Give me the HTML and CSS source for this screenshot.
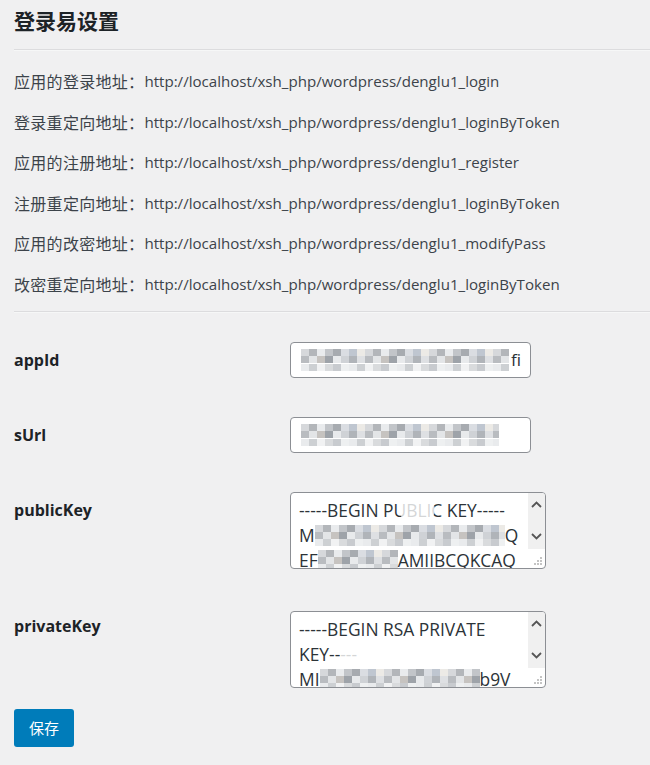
FILE: index.html
```html
<!DOCTYPE html>
<html lang="zh-CN">
<head>
<meta charset="utf-8">
<title>登录易设置</title>
<link rel="stylesheet" href="styles.css">
</head>
<body>
<div class="wrap">
  <h1 class="title">登录易设置</h1>
  <hr class="sep">
  <div class="urls">
    <p class="row"><span class="k">应用的登录地址：</span><span class="v">http://localhost/xsh_php/wordpress/denglu1_login</span></p>
    <p class="row"><span class="k">登录重定向地址：</span><span class="v">http://localhost/xsh_php/wordpress/denglu1_loginByToken</span></p>
    <p class="row"><span class="k">应用的注册地址：</span><span class="v">http://localhost/xsh_php/wordpress/denglu1_register</span></p>
    <p class="row"><span class="k">注册重定向地址：</span><span class="v">http://localhost/xsh_php/wordpress/denglu1_loginByToken</span></p>
    <p class="row"><span class="k">应用的改密地址：</span><span class="v">http://localhost/xsh_php/wordpress/denglu1_modifyPass</span></p>
    <p class="row"><span class="k">改密重定向地址：</span><span class="v">http://localhost/xsh_php/wordpress/denglu1_loginByToken</span></p>
  </div>
  <hr class="sep">
  <form class="form">
    <label class="lbl">appId</label>
    <div class="input"><span class="mosaic m1"></span><span class="tail">fi</span></div>

    <label class="lbl">sUrl</label>
    <div class="input"><span class="mosaic m2"></span></div>

    <label class="lbl">publicKey</label>
    <div class="ta">
      <div class="ta-text">
        <div class="line">-----BEGIN PUB<span class="blob"></span>LIC KEY-----</div>
        <div class="line">M<span class="mosaic m3"></span>Q</div>
        <div class="line">EF<span class="mosaic m4"></span>AMIIBCQKCAQ</div>
      </div>
      <div class="sb">
        <div class="track">
          <svg class="chev" width="11" height="7" viewBox="0 0 11 7"><polyline points="1,6 5.5,1.5 10,6" fill="none" stroke="#555" stroke-width="1.8"/></svg>
          <svg class="chev" width="11" height="7" viewBox="0 0 11 7"><polyline points="1,1 5.5,5.5 10,1" fill="none" stroke="#555" stroke-width="1.8"/></svg>
        </div>
        <div class="corner">
          <svg width="8" height="8" viewBox="0 0 8 8"><g fill="#c4c4c4"><rect x="6" y="0" width="2" height="2"/><rect x="3" y="3" width="2" height="2"/><rect x="6" y="3" width="2" height="2"/><rect x="0" y="6" width="2" height="2"/><rect x="3" y="6" width="2" height="2"/><rect x="6" y="6" width="2" height="2"/></g></svg>
        </div>
      </div>
    </div>

    <label class="lbl">privateKey</label>
    <div class="ta ta2">
      <div class="ta-text">
        <div class="line">-----BEGIN RSA PRIVATE</div>
        <div class="line">KEY----<span class="blob small"></span>-</div>
        <div class="line">MI<span class="mosaic m5"></span>b9V</div>
      </div>
      <div class="sb">
        <div class="track">
          <svg class="chev" width="11" height="7" viewBox="0 0 11 7"><polyline points="1,6 5.5,1.5 10,6" fill="none" stroke="#555" stroke-width="1.8"/></svg>
          <svg class="chev" width="11" height="7" viewBox="0 0 11 7"><polyline points="1,1 5.5,5.5 10,1" fill="none" stroke="#555" stroke-width="1.8"/></svg>
        </div>
        <div class="corner">
          <svg width="8" height="8" viewBox="0 0 8 8"><g fill="#c4c4c4"><rect x="6" y="0" width="2" height="2"/><rect x="3" y="3" width="2" height="2"/><rect x="6" y="3" width="2" height="2"/><rect x="0" y="6" width="2" height="2"/><rect x="3" y="6" width="2" height="2"/><rect x="6" y="6" width="2" height="2"/></g></svg>
        </div>
      </div>
    </div>
  </form>
  <button class="btn" type="button">保存</button>
</div>
</body>
</html>
```
FILE: styles.css
```css
html, body {
  margin: 0;
  padding: 0;
  background: #f0f0f1;
}
body {
  font-family: "Open Sans", "Noto Sans CJK SC", sans-serif;
  color: #3c434a;
}
.wrap {
  padding: 5px 0 0 14px;
}
.title {
  margin: 0;
  font-family: "Noto Sans CJK SC", sans-serif;
  font-size: 21px;
  line-height: 30px;
  font-weight: 700;
  color: #1d2327;
  height: 31px;
}
.sep {
  margin: 13px 0 0 0;
  border: 0;
  border-top: 1px solid #dcdcde;
  border-bottom: 1px solid #f6f7f7;
  height: 0;
}
.urls {
  display: flex;
  flex-direction: column;
  gap: 20.6px;
  padding: 20px 0 4px;
}
.row {
  margin: 0;
  height: 20px;
  line-height: 20px;
  white-space: nowrap;
  display: flex;
  align-items: center;
}
.k {
  font-family: "Noto Sans CJK SC", sans-serif;
  font-size: 16px;
  letter-spacing: 0.3px;
}
.v {
  font-size: 15.1px;
}
.form {
  display: grid;
  grid-template-columns: 276px auto;
  row-gap: 39px;
  padding-top: 29px;
  align-items: start;
}
.lbl {
  font-size: 16px;
  font-weight: 700;
  line-height: 36px;
  color: #1d2327;
}
.input {
  width: 241px;
  height: 36px;
  box-sizing: border-box;
  border: 1px solid #8c8f94;
  border-radius: 4px;
  background: #fff;
  display: flex;
  align-items: center;
  padding: 0 8px 0 10px;
  overflow: hidden;
}
.mosaic {
  display: inline-block;
  vertical-align: middle;
  height: 22px;
  background-image:
    repeating-linear-gradient(90deg, #d6d8db 0 8px, #b3b6ba 8px 16px, #e9ebed 16px 24px, #c2c5c9 24px 32px, #a7abb0 32px 40px, #dadde2 40px 48px, #bfc6d0 48px 56px, #eceae6 56px 64px),
    repeating-linear-gradient(90deg, #b9bcc0 0 8px, #e3e5e7 8px 16px, #c6c3c0 16px 24px, #9ea3a9 24px 32px, #e8eaec 32px 40px, #cfd2d6 40px 48px, #b0b4b9 48px 56px, #dee0e3 56px 64px),
    repeating-linear-gradient(90deg, #e9ebed 0 8px, #cdd0d3 8px 16px, #f1f2f3 16px 24px, #d9dbdd 24px 32px, #c8cbcf 32px 40px, #eef0f1 40px 48px);
  background-size: 100% 33.4%, 100% 33.4%, 100% 33.4%;
  background-position: 0 0, 0 50%, 0 100%;
  background-repeat: no-repeat;
}
.m1 { width: 208px; }
.m2 { width: 198px; }
.tail { font-size: 17px; color: #2c3338; margin-left: 2px; }
.ta {
  width: 256px;
  height: 77px;
  box-sizing: border-box;
  border: 1px solid #8c8f94;
  border-radius: 4px;
  background: #fff;
  display: flex;
  overflow: hidden;
}
.ta2 { margin-top: 3px; }
.ta-text {
  flex: 1;
  padding: 5px 0 0 8px;
  font-size: 17.4px;
  line-height: 25px;
  color: #2c3338;
  overflow: hidden;
  white-space: nowrap;
}
.line {
  height: 25px;
  display: flex;
  align-items: center;
}
.m3 { width: 190px; height: 21px; }
.m4 { width: 80px; height: 21px; }
.m5 { width: 160px; height: 21px; }
.blob {
  display: inline-block;
  width: 36px;
  height: 22px;
  background: rgba(255,255,255,0.8);
  border-radius: 11px;
  margin: 0 -18px;
  position: relative;
  z-index: 1;
}
.blob.small { width: 22px; margin: 0 -11px; }
.sb {
  width: 17px;
  flex: none;
  display: flex;
  flex-direction: column;
}
.track {
  flex: 1;
  background: #f0f0f0;
  display: flex;
  flex-direction: column;
  justify-content: space-between;
  align-items: center;
  padding: 8px 0 9px;
}
.chev { display: block; }
.corner {
  height: 19px;
  display: flex;
  align-items: flex-end;
  justify-content: flex-end;
  padding: 0 3px 3px 0;
  box-sizing: border-box;
}
.btn {
  margin-top: 21px;
  width: 60px;
  height: 38px;
  border: 0;
  border-radius: 3px;
  background: #007cba;
  color: #fff;
  font-family: "Noto Sans CJK SC", sans-serif;
  font-size: 15px;
  padding: 0;
  display: block;
}
```
